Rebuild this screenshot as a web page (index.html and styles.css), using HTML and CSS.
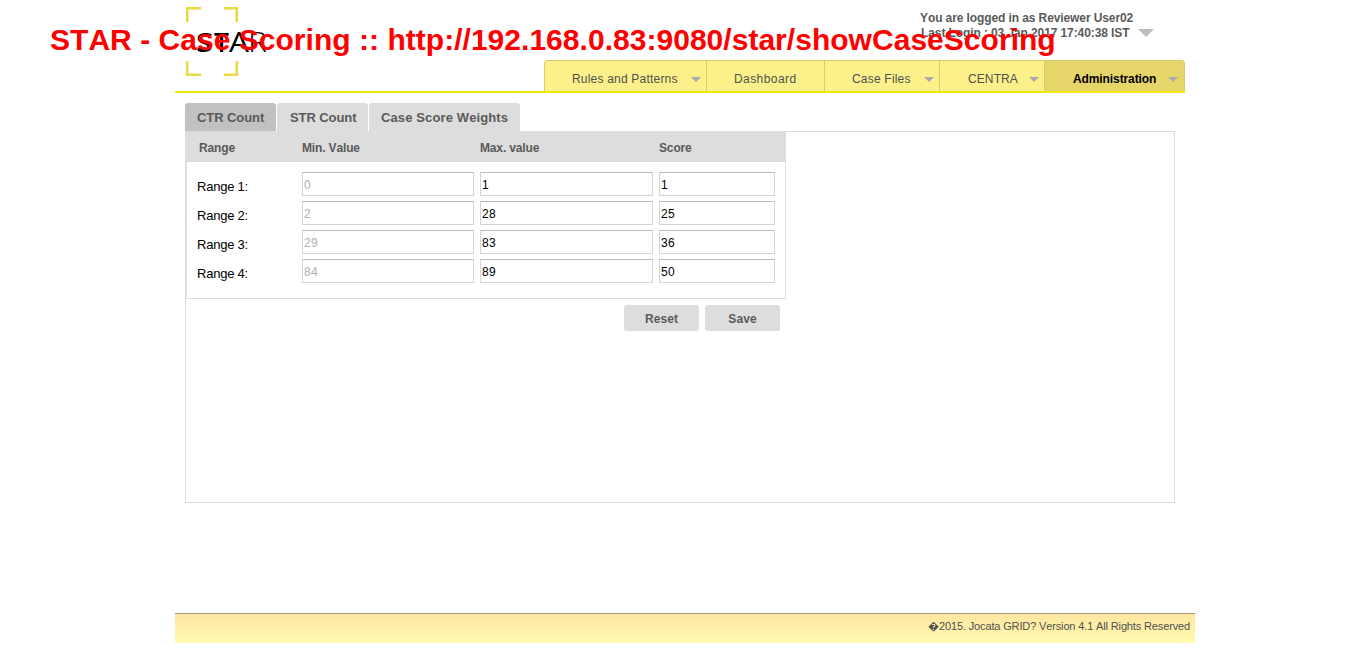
FILE: index.html
```html
<!DOCTYPE html>
<html lang="en">
<head>
<meta charset="utf-8">
<title>STAR - Case Scoring</title>
<link rel="stylesheet" href="styles.css">
</head>
<body>
<h1 class="page-banner">STAR - Case Scoring :: http://192.168.0.83:9080/star/showCaseScoring</h1>
<header class="header">
  <svg class="logo" width="94" height="70" viewBox="0 0 94 70">
    <path d="M1.2 15V1.2H15M38 1.2h12.8V15M1.2 54v13.8H15M38 67.8h12.8V54" fill="none" stroke="#e8da45" stroke-width="2.6"/>
    <g class="logo-text">
      <text x="10" y="45" font-weight="700" textLength="17" lengthAdjust="spacingAndGlyphs">S</text>
      <text x="28" y="45" font-weight="600" textLength="15" lengthAdjust="spacingAndGlyphs">T</text>
      <text x="43" y="45" font-weight="400" textLength="20" lengthAdjust="spacingAndGlyphs">A</text>
      <text x="62" y="45" font-weight="300" textLength="19" lengthAdjust="spacingAndGlyphs">R</text>
    </g>
  </svg>
  <div class="header-right">
    <div class="user">
      <div>You are logged in as Reviewer User02</div>
      <div class="last-login">Last Login : 03 Jan 2017 17:40:38 IST<svg class="user-arrow" width="16" height="8" viewBox="0 0 16 8"><path d="M0 0h16L8 8z" fill="#bdbdbd"/></svg></div>
    </div>
    <nav class="nav">
      <a class="nav-item">Rules and Patterns<i class="arrow"></i></a>
      <a class="nav-item nav-wide">Dashboard</a>
      <a class="nav-item">Case Files<i class="arrow"></i></a>
      <a class="nav-item nav-plain">CENTRA<i class="arrow"></i></a>
      <a class="nav-item nav-active">Administration<i class="arrow"></i></a>
    </nav>
  </div>
</header>
<main class="main">
  <div class="tabs">
    <a class="tab tab-active">CTR Count</a>
    <a class="tab tab-next">STR Count</a>
    <a class="tab tab-long">Case Score Weights</a>
  </div>
  <section class="panel">
    <form class="scores">
      <div class="row head"><span>Range</span><span>Min. Value</span><span>Max. value</span><span>Score</span></div>
      <div class="rows">
        <div class="row"><label>Range 1:</label><input value="0" disabled><input value="1"><input value="1"></div>
        <div class="row"><label>Range 2:</label><input value="2" disabled><input value="28"><input value="25"></div>
        <div class="row"><label>Range 3:</label><input value="29" disabled><input value="83"><input value="36"></div>
        <div class="row"><label>Range 4:</label><input value="84" disabled><input value="89"><input value="50"></div>
      </div>
    </form>
    <div class="actions"><button>Reset</button><button>Save</button></div>
  </section>
</main>
<footer class="footer">&#xFFFD;2015. Jocata GRID? Version 4.1 All Rights Reserved</footer>
</body>
</html>
```
FILE: styles.css
```css
* { box-sizing: border-box; }
body {
  margin: 0;
  padding-left: 175px;
  height: 658px;
  overflow: hidden;
  background: #fff;
  font: 12px/15px "Liberation Sans", Arial, sans-serif;
  font-kerning: none;
  color: #505050;
}
/* Banner lies over the header */
.page-banner {
  position: absolute;
  z-index: 5;
  left: 50px;
  top: 22px;
  margin: 0;
  font-size: 30px;
  line-height: 36px;
  letter-spacing: 0.03px;
  white-space: nowrap;
  color: #f00;
}
.header {
  display: flex;
  justify-content: space-between;
  width: 1010px;
  height: 93px;
  border-bottom: 2px solid #f5e800;
}
.logo { margin: 7px 0 0 11px; }
.logo-text { font-family: "Open Sans", sans-serif; font-size: 27.5px; fill: #000; }
.header-right {
  display: flex;
  flex-direction: column;
  justify-content: space-between;
  width: 641px;
}
.user {
  padding: 11px 0 0 376px;
  color: #5a5a5a;
  font-weight: bold;
  letter-spacing: -0.1px;
  white-space: nowrap;
}
.last-login { padding-left: 1px; }
.user-arrow { margin-left: 9px; vertical-align: 0; }
.nav {
  display: grid;
  grid-template-columns: 162px 118px 115px 105px 141px;
  height: 31px;
  border: 1px solid #d8cc68;
  border-bottom: 0;
  border-radius: 4px 4px 0 0;
  background: #fcf08a;
  overflow: hidden;
}
.nav-item {
  display: flex;
  justify-content: space-between;
  align-items: center;
  padding: 6px 5px 0 27px;
  border-right: 1px solid #d8cc68;
  letter-spacing: 0.2px;
  white-space: nowrap;
}
.nav-wide { letter-spacing: 0.42px; }
.nav-plain { padding-left: 28px; letter-spacing: 0.1px; }
.nav-active {
  padding-left: 28px;
  padding-right: 8px;
  border-right: 0;
  background: #e6d568;
  color: #000;
  font-weight: bold;
  letter-spacing: -0.1px;
}
.arrow {
  border: 5px solid transparent;
  border-top-color: #aaa;
  border-bottom: 0;
}
.main { width: 990px; margin: 10px 0 0 10px; }
.tabs { display: flex; gap: 1px; }
.tab {
  width: 91px;
  height: 28px;
  padding-left: 12px;
  border-radius: 3px 3px 0 0;
  background: #ddd;
  color: #5a5a5a;
  font-size: 13px;
  line-height: 29px;
  font-weight: bold;
  letter-spacing: -0.08px;
  white-space: nowrap;
}
.tab-active { background: #c1c1c1; }
.tab-next { padding-left: 13px; }
.tab-long { width: 151px; letter-spacing: 0.12px; }
.panel { height: 372px; border: 1px solid #ddd; }
.scores { width: 600px; height: 167px; border: 1px solid #ddd; border-top: 0; }
.row {
  display: grid;
  grid-template-columns: 99px 172px 173px 116px;
  column-gap: 6px;
}
.head {
  height: 30px;
  padding-left: 10px;
  line-height: 33px;
  background: #ddd;
  color: #5a5a5a;
  font-weight: bold;
  letter-spacing: -0.15px;
}
.head span:first-child { padding-left: 2px; }
.rows { display: grid; gap: 5px; padding: 10px 0 0 10px; }
.row label {
  height: 24px;
  color: #000;
  font-size: 13px;
  line-height: 30px;
  letter-spacing: -0.22px;
}
.row input {
  width: 100%;
  height: 24px;
  padding: 2px 1px 0;
  border: 1px solid #d5d5d5;
  border-top-color: #bbb;
  border-radius: 0;
  background: #fff;
  color: #000;
  font: 12px "Liberation Sans", Arial, sans-serif;
  letter-spacing: 0.3px;
}
.row input:disabled { color: #b0b0b0; }
.actions { display: flex; gap: 6px; padding: 6px 0 0 438px; }
.actions button {
  width: 75px;
  height: 26px;
  padding: 1px 0 0;
  border: 0;
  border-radius: 3px;
  background: #ddd;
  color: #5a5a5a;
  font: bold 12px "Liberation Sans", Arial, sans-serif;
  letter-spacing: 0.1px;
}
.footer {
  width: 1020px;
  height: 30px;
  margin-top: 110px;
  padding: 5px 5px 0 0;
  border-top: 1px solid #a09c78;
  background: linear-gradient(#ffe5a0, #fffbb0);
  font-size: 11px;
  text-align: right;
  letter-spacing: -0.14px;
}
```
